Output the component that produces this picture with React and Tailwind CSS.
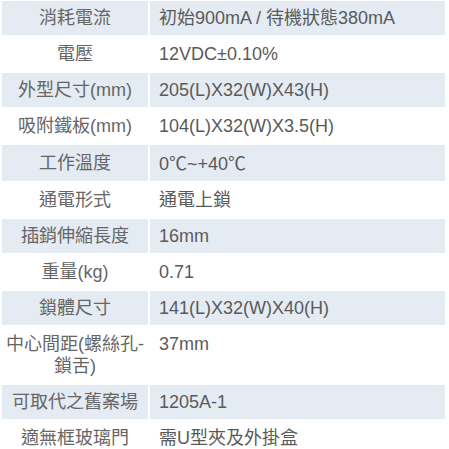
import React from 'react';

const Deg = () => <span className="font-['Noto_Sans_CJK_TC',sans-serif]">℃</span>;

const specs = [
  ['消耗電流', '初始900mA / 待機狀態380mA'],
  ['電壓', '12VDC±0.10%'],
  ['外型尺寸(mm)', '205(L)X32(W)X43(H)'],
  ['吸附鐵板(mm)', '104(L)X32(W)X3.5(H)'],
  ['工作溫度', <>0<Deg />~+40<Deg /></>],
  ['通電形式', '通電上鎖'],
  ['插銷伸縮長度', '16mm'],
  ['重量(kg)', '0.71'],
  ['鎖體尺寸', '141(L)X32(W)X40(H)'],
  ['中心間距(螺絲孔-鎖舌)', '37mm'],
  ['可取代之舊案場', '1205A-1'],
  ['適無框玻璃門', '需U型夾及外掛盒'],
];

const App = () => {
  return (
    <div className="w-[449px] h-[449px] overflow-hidden bg-white -mt-[1px] font-['Liberation_Sans','Noto_Sans_CJK_TC',sans-serif]">
      {/* Spec table */}
      <table className="w-[447px] border-separate border-spacing-[2px] text-[18px] leading-[22px] text-[#5a5a5a]">
        <tbody>
          {specs.map(([label, value], i) => (
            <tr key={label} className={i % 2 === 0 ? 'bg-[#e4ebf3]' : 'bg-white'}>
              <td className="w-[146px] px-[3px] py-[6px] text-center align-middle text-[#666]">
                {label}
              </td>
              <td className="px-[9px] py-[6px] text-left align-top">{value}</td>
            </tr>
          ))}
        </tbody>
      </table>
    </div>
  );
};

export default App;
